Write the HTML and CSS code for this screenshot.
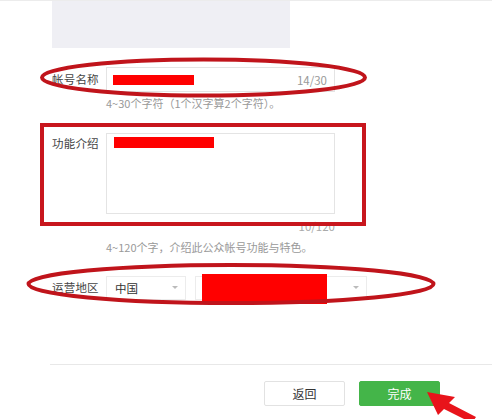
FILE: index.html
```html
<!DOCTYPE html>
<html lang="zh">
<head>
<meta charset="utf-8">
<link rel="stylesheet" href="styles.css">
</head>
<body>
<div class="page">
  <div class="banner"></div>
  <div class="form">
    <div class="row row-name">
      <label class="label">帐号名称</label>
      <div class="input">
        <span class="redact redact-name"></span>
        <span class="count">14/30</span>
      </div>
    </div>
    <p class="hint hint-name">4~30个字符（1个汉字算2个字符）。</p>

    <div class="row row-intro">
      <label class="label">功能介绍</label>
      <div class="textarea">
        <span class="redact redact-intro"></span>
      </div>
    </div>
    <div class="count-below">10/120</div>
    <p class="hint hint-intro">4~120个字，介绍此公众帐号功能与特色。</p>

    <div class="row row-region">
      <label class="label">运营地区</label>
      <div class="select select-country">
        <span class="select-text">中国</span>
        <span class="caret"></span>
      </div>
      <div class="select select-city">
        <span class="redact redact-city"></span>
        <span class="caret"></span>
      </div>
    </div>
  </div>
  <div class="footer">
    <button class="btn btn-back">返回</button>
    <button class="btn btn-done">完成</button>
  </div>
  <svg class="marks" width="492" height="419" viewBox="0 0 492 419">
    <ellipse cx="203.5" cy="77.5" rx="161.5" ry="18" fill="none" stroke="#c0141b" stroke-width="4"/>
    <rect x="42" y="125" width="322" height="99" fill="none" stroke="#c8161d" stroke-width="4"/>
    <ellipse cx="231" cy="284" rx="202.5" ry="19" fill="none" stroke="#c0141b" stroke-width="4"/>
    <polygon points="427,392 455,397 449,403 476,417 472,423 444,409 438,415" fill="#e8141b"/>
  </svg>
</div>
</body>
</html>
```
FILE: styles.css
```css
* { box-sizing: border-box; }
html, body {
  margin: 0;
  padding: 0;
  background: #fff;
}
body {
  font-family: "Noto Sans CJK SC", "Liberation Sans", sans-serif;
  font-size: 12px;
  color: #333;
}
.page {
  position: relative;
  width: 492px;
  height: 419px;
  overflow: hidden;
  border-top: 1px solid #ececec;
}
.banner {
  margin-left: 52px;
  width: 238px;
  height: 47px;
  background: #efeff4;
}
.form {
  padding-left: 52px;
  padding-top: 19px;
}
.row {
  display: flex;
  align-items: flex-start;
}
.label {
  width: 54px;
  flex: none;
  line-height: 25px;
  color: #444;
  font-size: 11.5px;
  letter-spacing: 0.2px;
}
.input {
  width: 229px;
  height: 25px;
  border: 1px solid #e4e4e4;
  display: flex;
  align-items: center;
  justify-content: space-between;
  padding: 0 7px 0 6px;
}
.redact {
  display: block;
  background: #ff0000;
}
.redact-name { width: 81px; height: 10px; }
.count { color: #999; font-size: 11.5px; }
.hint {
  margin: 0;
  color: #999;
  font-size: 11px;
  line-height: 14px;
  padding-left: 54px;
}
.hint-name { margin-top: 4px; }
.row-intro { margin-top: 23px; }
.row-intro .label { line-height: 20px; }
.textarea {
  width: 229px;
  height: 81px;
  border: 1px solid #e4e4e4;
  padding: 3px 7px;
}
.redact-intro { width: 100px; height: 11px; }
.count-below {
  width: 283px;
  text-align: right;
  color: #aaa;
  font-size: 11.5px;
  line-height: 14px;
  margin-top: 5px;
}
.hint-intro { margin-top: 7px; }
.row-region { margin-top: 21px; align-items: center; }
.select {
  height: 24px;
  border: 1px solid #ececec;
  display: flex;
  align-items: center;
  justify-content: space-between;
  padding: 0 7px 0 8px;
  position: relative;
}
.select-country { width: 80px; }
.select-text { color: #333; font-size: 11.5px; }
.select-city { width: 172px; margin-left: 9px; }
.redact-city {
  position: absolute;
  left: 6px;
  top: -3px;
  width: 125px;
  height: 30px;
}
.select-city .caret { margin-left: auto; }
.caret {
  width: 0;
  height: 0;
  border-left: 3.5px solid transparent;
  border-right: 3.5px solid transparent;
  border-top: 3.5px solid #bbb;
}
.footer {
  position: absolute;
  left: 50px;
  right: 0;
  top: 363px;
  border-top: 1px solid #e8e8e8;
  padding-top: 16px;
  display: flex;
  justify-content: flex-start;
  padding-left: 214px;
  gap: 14px;
}
.btn {
  width: 81px;
  height: 25px;
  font-family: inherit;
  font-size: 12px;
  border-radius: 2px;
  padding: 0;
  cursor: pointer;
}
.btn-back {
  background: #fff;
  border: 1px solid #e2e2e2;
  color: #333;
}
.btn-done {
  background: #44b549;
  border: 1px solid #44b549;
  color: #fff;
}
.marks {
  position: absolute;
  left: 0;
  top: -1px;
  pointer-events: none;
}
```
